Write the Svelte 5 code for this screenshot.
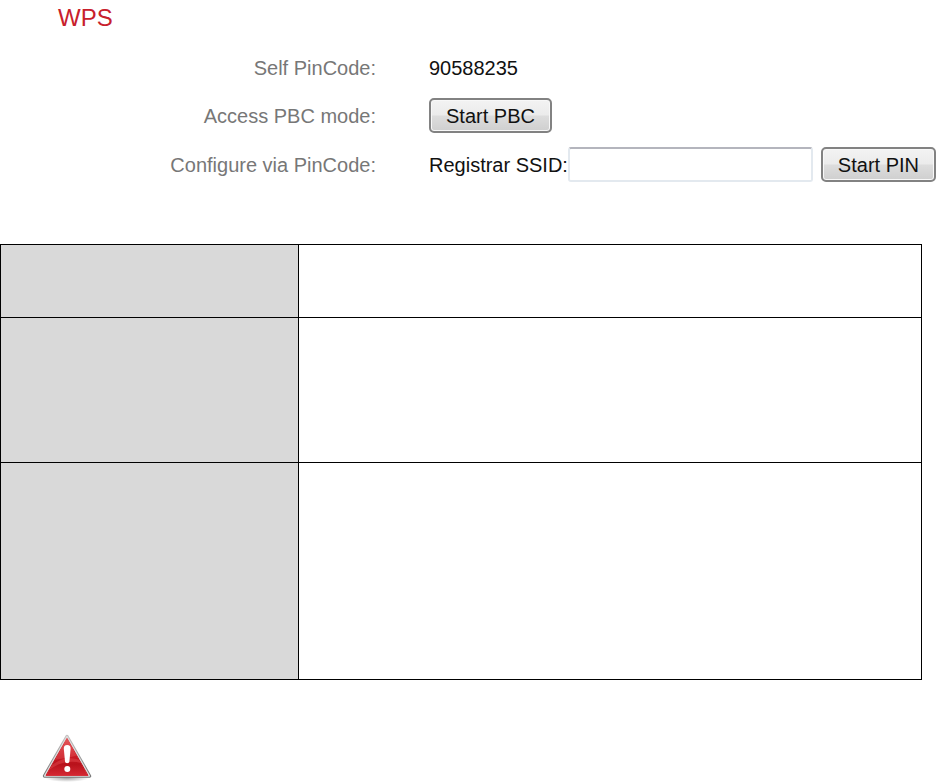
<script>
  let pinCode = $state('90588235');
  let ssid = $state('');

  const rows = ['short', 'medium', 'tall'];
</script>

<main>
  <section class="wps">
    <h1>WPS</h1>

    <div class="form">
      <span class="name">Self PinCode:</span>
      <div class="field">
        <output class="pin">{pinCode}</output>
      </div>

      <span class="name">Access PBC mode:</span>
      <div class="field">
        <button type="button">Start PBC</button>
      </div>

      <span class="name">Configure via PinCode:</span>
      <div class="field">
        <label for="ssid">Registrar SSID:</label>
        <input id="ssid" type="text" bind:value={ssid} />
        <button type="button">Start PIN</button>
      </div>
    </div>
  </section>

  <table>
    <tbody>
      {#each rows as size}
        <tr class={size}>
          <th scope="row"></th>
          <td></td>
        </tr>
      {/each}
    </tbody>
  </table>

  <svg class="warning" viewBox="0 0 50 48" role="img" aria-label="Warning">
    <defs>
      <linearGradient id="red" x1="0" y1="0" x2="0" y2="1">
        <stop offset="0" stop-color="#e2484c" />
        <stop offset="0.45" stop-color="#cc1c26" />
        <stop offset="0.7" stop-color="#b8121b" />
        <stop offset="1" stop-color="#d42832" />
      </linearGradient>
      <linearGradient id="rim" x1="0" y1="0" x2="0" y2="1">
        <stop offset="0" stop-color="#c4c0c0" />
        <stop offset="1" stop-color="#777" />
      </linearGradient>
      <radialGradient id="shade">
        <stop offset="0" stop-color="#000" stop-opacity="0.35" />
        <stop offset="1" stop-color="#000" stop-opacity="0" />
      </radialGradient>
    </defs>
    <ellipse cx="25" cy="44" rx="22" ry="4" fill="url(#shade)" />
    <path d="M25 2.5 L47.5 42 H2.5 Z" fill="url(#rim)" stroke="url(#rim)" stroke-width="3.4" stroke-linejoin="round" />
    <path d="M25 2.5 L47.5 42 H2.5 Z" fill="#ddd" stroke="#ddd" stroke-width="1.4" stroke-linejoin="round" />
    <path d="M25 4.4 L46 41.4 H4 Z" fill="url(#red)" stroke="url(#red)" stroke-width="1" stroke-linejoin="round" />
    <path d="M25 5 L34.5 21.5 C29 23.5 22 24 13 25.8 Z" fill="#f08080" opacity="0.25" />
    <path d="M10 31 C20 23 31 23 37 26 L39 29 C29 26 18 28 7 36 Z" fill="#e8555a" opacity="0.4" />
    <path d="M25.2 11 C27.8 11 28.7 12.6 28.6 14.8 L27.4 27.4 C27.1 29.8 23.3 29.8 23 27.4 L21.8 14.8 C21.7 12.6 22.6 11 25.2 11 Z" fill="#fff" />
    <circle cx="25.3" cy="35" r="3" fill="#fff" />
  </svg>
</main>

<style>
  :global(body) {
    margin: 0;
    background: #fff;
  }

  main {
    font-family: 'Liberation Sans', Arial, Helvetica, sans-serif;
    font-size: 20px;
    line-height: 32px;
    color: #111;
  }

  .wps {
    padding-right: 14px;
  }

  h1 {
    margin: 0 0 16px;
    padding-left: 58px;
    font-size: 24px;
    font-weight: 400;
    line-height: 36px;
    color: #c8202c;
  }

  .form {
    display: grid;
    grid-template-columns: 376px 1fr;
    gap: 14px 53px;
    align-items: center;
  }

  .name {
    text-align: right;
    color: #777;
  }

  .field {
    display: flex;
    align-items: center;
  }

  input {
    flex: 1;
    min-width: 0;
    height: 35px;
    box-sizing: border-box;
    margin-right: 8px;
    padding: 0 6px;
    border: 2px solid #e3e9ef;
    border-top-color: #b4b5bd;
    border-radius: 3px;
    background: #fff;
    font: inherit;
    color: inherit;
  }

  button {
    height: 35px;
    box-sizing: border-box;
    padding: 1px 15px 0;
    border: 2px solid #828282;
    border-radius: 5px;
    background: linear-gradient(#f3f3f3 0%, #ebebeb 48%, #dddddd 52%, #cfcfcf 100%);
    box-shadow: inset 0 0 0 1px #f8f8f8;
    font: inherit;
    line-height: 30px;
    color: #111;
    white-space: nowrap;
    cursor: pointer;
  }

  button:active {
    background: linear-gradient(#dcdcdc, #c4c4c4);
  }

  table {
    width: calc(100% - 28px);
    margin-top: 62px;
    border-collapse: collapse;
    table-layout: fixed;
  }

  th,
  td {
    padding: 0;
    border: 1px solid #000;
  }

  th {
    width: 297px;
    background: #d9d9d9;
  }

  .short {
    height: 73px;
  }

  .medium {
    height: 145px;
  }

  .tall {
    height: 217px;
  }

  .warning {
    display: block;
    width: 50px;
    height: 48px;
    margin: 54px 0 0 42px;
  }
</style>
